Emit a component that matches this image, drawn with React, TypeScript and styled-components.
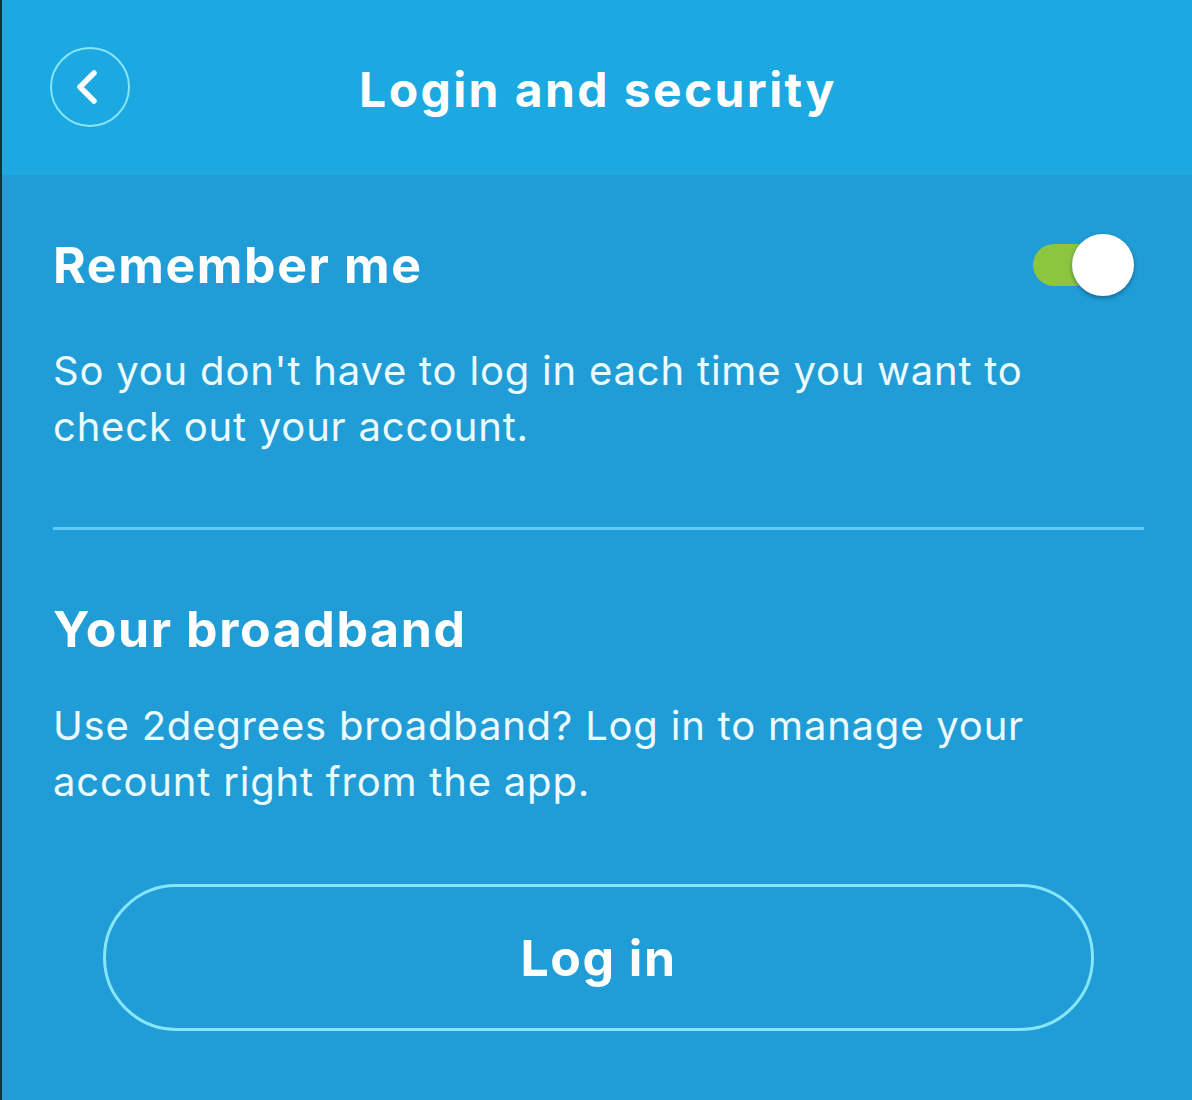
import React, { useState } from 'react'
import styled, { createGlobalStyle } from 'styled-components'

const GlobalStyle = createGlobalStyle`
    html, body {
        margin: 0;
        padding: 0;
        background: #209dd6;
    }
    body {
        font-family: Inter, "Open Sans", "Liberation Sans", sans-serif;
        -webkit-font-smoothing: antialiased;
    }
`

const Screen = styled.div`
    width: 1192px;
    height: 1100px;
    background: #209dd6;
    border-left: 2px solid #1b2f3a;
    box-sizing: border-box;
    display: flex;
    flex-direction: column;
    overflow: hidden;
`

const Header = styled.header`
    height: 175px;
    background: #1ca8e1;
    display: grid;
    grid-template-columns: 130px 1fr 130px;
    align-items: center;
    padding: 0 46px 0 48px;
    box-sizing: border-box;
`

const BackButton = styled.button`
    width: 80px;
    height: 80px;
    border-radius: 50%;
    border: 2px solid #86e6fb;
    background: transparent;
    display: flex;
    align-items: center;
    justify-content: center;
    padding: 0 6px 0 0;
    margin-bottom: 2px;
    cursor: pointer;
`

const Title = styled.h1`
    margin: 4px 0 0 0;
    text-align: center;
    color: #ffffff;
    font-size: 48px;
    font-weight: 700;
    letter-spacing: 2.4px;
`

const Content = styled.main`
    flex: 1;
    padding: 58px 48px 0 51px;
    display: flex;
    flex-direction: column;
`

const Section = styled.section<{ gap: number }>`
    display: flex;
    flex-direction: column;
    gap: ${p => p.gap}px;
`

const HeadingRow = styled.div`
    display: flex;
    align-items: center;
    justify-content: space-between;
`

const Heading = styled.h2`
    margin: 0;
    color: #ffffff;
    font-size: 50px;
    line-height: 60px;
    font-weight: 700;
    letter-spacing: 1.6px;
`

const Body = styled.p`
    margin: 0;
    color: #ecfbff;
    font-size: 40px;
    line-height: 56px;
    font-weight: 400;
    letter-spacing: 0.8px;
    max-width: 1040px;
`

const Divider = styled.hr`
    border: none;
    height: 3px;
    background: #5ccbf5;
    margin: 72px 0 69px 0;
`

const Switch = styled.button<{ on: boolean }>`
    position: relative;
    width: 102px;
    height: 64px;
    border: none;
    background: transparent;
    padding: 0;
    margin-right: 9px;
    cursor: pointer;
`

const Track = styled.span<{ on: boolean }>`
    position: absolute;
    left: 0;
    top: 11px;
    width: 80px;
    height: 42px;
    border-radius: 21px;
    background: ${p => (p.on ? '#8cc63f' : '#9fd3ea')};
`

const Knob = styled.span<{ on: boolean }>`
    position: absolute;
    top: 1px;
    left: ${p => (p.on ? '39px' : '0px')};
    width: 62px;
    height: 62px;
    border-radius: 50%;
    background: #ffffff;
    box-shadow: 0 2px 4px rgba(0, 40, 70, 0.45);
`

const OutlineButton = styled.button`
    margin: 74px 50px 0 50px;
    height: 147px;
    border-radius: 74px;
    border: 3px solid #86e6fb;
    background: transparent;
    color: #ffffff;
    font-family: Inter, "Open Sans", "Liberation Sans", sans-serif;
    font-size: 50px;
    font-weight: 700;
    letter-spacing: 1.5px;
    cursor: pointer;
`

const ChevronLeft = () => (
    <svg width="26" height="36" viewBox="0 0 26 36" fill="none">
        <path d="M20 4 L6 18 L20 32" stroke="#ffffff" strokeWidth="5.5" strokeLinecap="round" strokeLinejoin="round" />
    </svg>
)

export default function App() {
    const [remember, setRemember] = useState(true)

    return (
        <Screen>
            <GlobalStyle />
            <Header>
                <BackButton aria-label="Back">
                    <ChevronLeft />
                </BackButton>
                <Title>Login and security</Title>
                <span />
            </Header>
            <Content>
                <Section gap={46}>
                    <HeadingRow>
                        <Heading>Remember me</Heading>
                        <Switch on={remember} onClick={() => setRemember(!remember)} aria-label="Remember me">
                            <Track on={remember} />
                            <Knob on={remember} />
                        </Switch>
                    </HeadingRow>
                    <Body>So you don't have to log in each time you want to check out your account.</Body>
                </Section>
                <Divider />
                <Section gap={39}>
                    <Heading>Your broadband</Heading>
                    <Body>Use 2degrees broadband? Log in to manage your account right from the app.</Body>
                </Section>
                <OutlineButton>Log in</OutlineButton>
            </Content>
        </Screen>
    )
}
